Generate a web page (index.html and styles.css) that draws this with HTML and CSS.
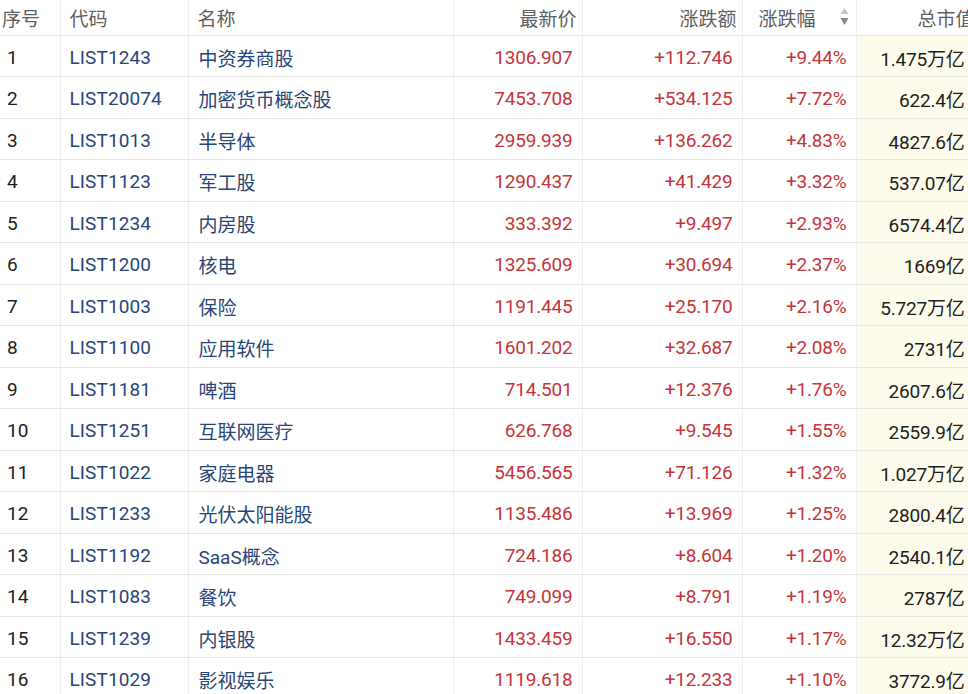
FILE: index.html
```html
<!DOCTYPE html>
<html lang="zh-CN">
<head>
<meta charset="utf-8">
<title>板块排行</title>
<link rel="stylesheet" href="styles.css">
</head>
<body>
<table class="board">
  <colgroup>
    <col class="c-idx"><col class="c-code"><col class="c-name"><col class="c-price"><col class="c-chg"><col class="c-pct"><col class="c-cap">
  </colgroup>
  <thead>
    <tr>
      <th class="left idx">序号</th>
      <th class="left">代码</th>
      <th class="left">名称</th>
      <th class="right">最新价</th>
      <th class="right">涨跌额</th>
      <th class="right sort"><span class="sort-wrap"><span>涨跌幅</span><svg class="arrows" width="9" height="22" viewBox="0 0 9 22"><path d="M4.5 4 L8.5 10 L0.5 10 Z" fill="#c9c9c9"/><path d="M0.5 14 L8.5 14 L4.5 21 Z" fill="#8a8a8a"/></svg></span></th>
      <th class="right cap">总市值</th>
    </tr>
  </thead>
  <tbody>
    <tr><td class="idx">1</td><td class="code">LIST1243</td><td class="name">中资券商股</td><td class="num">1306.907</td><td class="num">+112.746</td><td class="num">+9.44%</td><td class="mcap">1.475万亿</td></tr>
    <tr><td class="idx">2</td><td class="code">LIST20074</td><td class="name">加密货币概念股</td><td class="num">7453.708</td><td class="num">+534.125</td><td class="num">+7.72%</td><td class="mcap">622.4亿</td></tr>
    <tr><td class="idx">3</td><td class="code">LIST1013</td><td class="name">半导体</td><td class="num">2959.939</td><td class="num">+136.262</td><td class="num">+4.83%</td><td class="mcap">4827.6亿</td></tr>
    <tr><td class="idx">4</td><td class="code">LIST1123</td><td class="name">军工股</td><td class="num">1290.437</td><td class="num">+41.429</td><td class="num">+3.32%</td><td class="mcap">537.07亿</td></tr>
    <tr><td class="idx">5</td><td class="code">LIST1234</td><td class="name">内房股</td><td class="num">333.392</td><td class="num">+9.497</td><td class="num">+2.93%</td><td class="mcap">6574.4亿</td></tr>
    <tr><td class="idx">6</td><td class="code">LIST1200</td><td class="name">核电</td><td class="num">1325.609</td><td class="num">+30.694</td><td class="num">+2.37%</td><td class="mcap">1669亿</td></tr>
    <tr><td class="idx">7</td><td class="code">LIST1003</td><td class="name">保险</td><td class="num">1191.445</td><td class="num">+25.170</td><td class="num">+2.16%</td><td class="mcap">5.727万亿</td></tr>
    <tr><td class="idx">8</td><td class="code">LIST1100</td><td class="name">应用软件</td><td class="num">1601.202</td><td class="num">+32.687</td><td class="num">+2.08%</td><td class="mcap">2731亿</td></tr>
    <tr><td class="idx">9</td><td class="code">LIST1181</td><td class="name">啤酒</td><td class="num">714.501</td><td class="num">+12.376</td><td class="num">+1.76%</td><td class="mcap">2607.6亿</td></tr>
    <tr><td class="idx">10</td><td class="code">LIST1251</td><td class="name">互联网医疗</td><td class="num">626.768</td><td class="num">+9.545</td><td class="num">+1.55%</td><td class="mcap">2559.9亿</td></tr>
    <tr><td class="idx">11</td><td class="code">LIST1022</td><td class="name">家庭电器</td><td class="num">5456.565</td><td class="num">+71.126</td><td class="num">+1.32%</td><td class="mcap">1.027万亿</td></tr>
    <tr><td class="idx">12</td><td class="code">LIST1233</td><td class="name">光伏太阳能股</td><td class="num">1135.486</td><td class="num">+13.969</td><td class="num">+1.25%</td><td class="mcap">2800.4亿</td></tr>
    <tr><td class="idx">13</td><td class="code">LIST1192</td><td class="name">SaaS概念</td><td class="num">724.186</td><td class="num">+8.604</td><td class="num">+1.20%</td><td class="mcap">2540.1亿</td></tr>
    <tr><td class="idx">14</td><td class="code">LIST1083</td><td class="name">餐饮</td><td class="num">749.099</td><td class="num">+8.791</td><td class="num">+1.19%</td><td class="mcap">2787亿</td></tr>
    <tr><td class="idx">15</td><td class="code">LIST1239</td><td class="name">内银股</td><td class="num">1433.459</td><td class="num">+16.550</td><td class="num">+1.17%</td><td class="mcap">12.32万亿</td></tr>
    <tr><td class="idx">16</td><td class="code">LIST1029</td><td class="name">影视娱乐</td><td class="num">1119.618</td><td class="num">+12.233</td><td class="num">+1.10%</td><td class="mcap">3772.9亿</td></tr>
  </tbody>
</table>
</body>
</html>
```
FILE: styles.css
```css
html, body {
  margin: 0;
  padding: 0;
  background: #ffffff;
  overflow: hidden;
}

body {
  font-family: Roboto, "Noto Sans CJK SC", sans-serif;
  font-size: 19px;
  color: #222222;
}

.board {
  width: 975px;
  table-layout: fixed;
  border-collapse: collapse;
}

.c-idx { width: 60px; }
.c-code { width: 128px; }
.c-name { width: 265px; }
.c-price { width: 129px; }
.c-chg { width: 160px; }
.c-pct { width: 114px; }
.c-cap { width: 119px; }

.board th,
.board td {
  border-right: 1px solid #eeeeee;
  border-bottom: 1px solid #e6e6e6;
  white-space: nowrap;
  overflow: hidden;
}

.board th {
  height: 35px;
  padding: 1px 5px 0 9px;
  font-weight: 400;
  color: #5f5f5f;
  box-sizing: border-box;
}

.board th.left { text-align: left; }
.board th.right { text-align: right; }
.board th.idx { padding-left: 2px; }
.board th.cap { padding-right: 0; overflow: visible; }

.sort-wrap {
  display: inline-flex;
  align-items: center;
  gap: 24px;
}

.arrows {
  display: block;
  margin-top: -6px;
}

.board th.sort { padding-right: 7px; }

.board td {
  height: 41.5px;
  padding: 3px 9px 0;
  box-sizing: border-box;
}

.board td.idx {
  padding-left: 7px;
  color: #1e1e1e;
}

.board td.code,
.board td.name {
  color: #284676;
  text-align: left;
}

.board td.code {
  letter-spacing: 0.1px;
}

.board td.name { padding-left: 10px; }

.board td.num {
  color: #c5353a;
  text-align: right;
  letter-spacing: -0.2px;
}

.board td.mcap {
  background: #fcfbec;
  color: #1e1e1e;
  text-align: right;
  padding-right: 10px;
  letter-spacing: -0.2px;
}
```
